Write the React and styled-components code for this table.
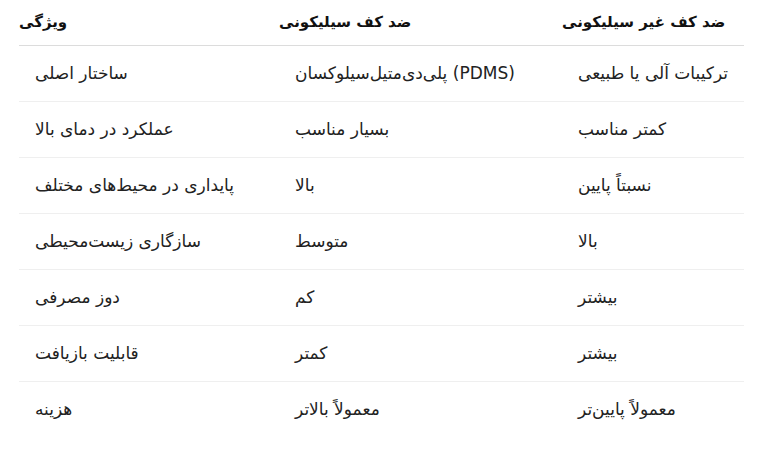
import React from "react"
import styled, { createGlobalStyle } from "styled-components"

const GlobalStyle = createGlobalStyle`
	html, body {
		margin: 0;
		padding: 0;
		background: #ffffff;
	}
	body {
		font-family: "DejaVu Sans", "Noto Sans", sans-serif;
		color: #1f1f1f;
	}
`

const Wrapper = styled.div`
	padding: 0 23px 0 19px;
`

const Table = styled.table`
	width: 100%;
	border-collapse: collapse;
	table-layout: fixed;
`

const HeadCell = styled.th`
	text-align: left;
	font-size: 15px;
	font-weight: bold;
	color: #111111;
	padding: 12px 0 12px 0;
	line-height: 21px;
	border-bottom: 1px solid #dcdcdc;
`

const Cell = styled.td`
	text-align: left;
	font-size: 17px;
	color: #222222;
	padding: 16px 0 16px 16px;
	line-height: 23px;
	border-bottom: ${props => (props.last ? "none" : "1px solid #efefef")};
`

const rows = [
	["ساختار اصلی", "پلی‌دی‌متیل‌سیلوکسان (PDMS)", "ترکیبات آلی یا طبیعی"],
	["عملکرد در دمای بالا", "بسیار مناسب", "کمتر مناسب"],
	["پایداری در محیط‌های مختلف", "بالا", "نسبتاً پایین"],
	["سازگاری زیست‌محیطی", "متوسط", "بالا"],
	["دوز مصرفی", "کم", "بیشتر"],
	["قابلیت بازیافت", "کمتر", "بیشتر"],
	["هزینه", "معمولاً بالاتر", "معمولاً پایین‌تر"],
]

const App = () => {
	return (
		<Wrapper>
			<GlobalStyle />
			<Table>
				<colgroup>
					<col style={{ width: "260px" }} />
					<col style={{ width: "283px" }} />
					<col />
				</colgroup>
				<thead>
					<tr>
						<HeadCell>ویژگی</HeadCell>
						<HeadCell>ضد کف سیلیکونی</HeadCell>
						<HeadCell>ضد کف غیر سیلیکونی</HeadCell>
					</tr>
				</thead>
				<tbody>
					{rows.map((row, i) => (
						<tr key={i}>
							{row.map((text, j) => (
								<Cell key={j} last={i === rows.length - 1}>
									{text}
								</Cell>
							))}
						</tr>
					))}
				</tbody>
			</Table>
		</Wrapper>
	)
}

export default App
